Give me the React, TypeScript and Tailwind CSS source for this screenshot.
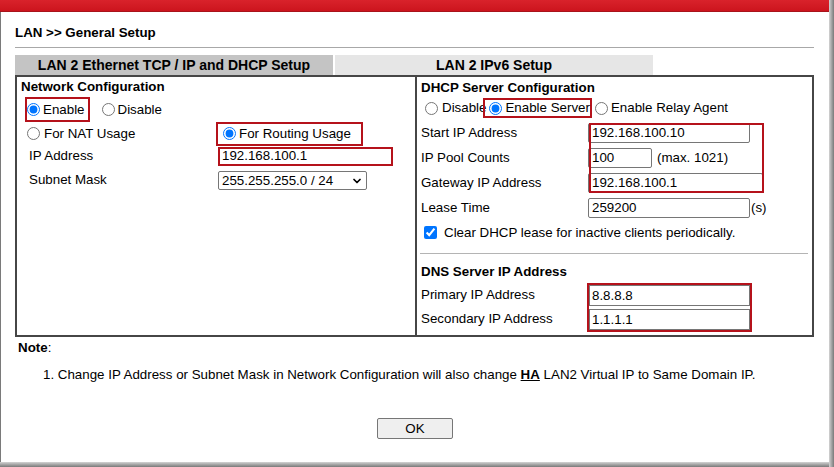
import { ChevronDown } from "lucide-react";

function Radio({ checked = false }: { checked?: boolean }) {
  return (
    <input
      type="radio"
      defaultChecked={checked}
      className="m-0 size-[13px] shrink-0"
    />
  );
}

function TextBox({ value, width }: { value: string; width: string }) {
  return (
    <input
      type="text"
      defaultValue={value}
      className={
        "h-[20px] rounded-[2px] border border-[#767676] bg-white px-[3px] text-[13.33px] text-black outline-none " +
        width
      }
    />
  );
}

function NetworkConfig() {
  return (
    <div className="border-r-2 border-[#464646]">
      <div className="h-[20px] pl-[4px] font-bold leading-[20px]">
        Network Configuration
      </div>
      <div className="flex h-[25px] items-stretch">
        <label className="ml-[8px] flex items-center gap-[3px] border-2 border-[#b5121b] pr-[3px]">
          <Radio checked />
          Enable
        </label>
        <label className="ml-[12px] flex items-center gap-[3px]">
          <Radio />
          Disable
        </label>
      </div>
      <div className="grid h-[22px] grid-cols-[201px_1fr]">
        <label className="ml-[10px] flex items-center gap-[4px]">
          <Radio />
          For NAT Usage
        </label>
        <label className="-ml-[2px] flex w-fit items-center gap-[3px] border-2 border-[#b5121b] pl-[5px] pr-[10px]">
          <Radio checked />
          For Routing Usage
        </label>
      </div>
      <div className="grid h-[24px] grid-cols-[201px_1fr] items-center">
        <span className="pl-[12px]">IP Address</span>
        <input
          type="text"
          defaultValue="192.168.100.1"
          className="h-[19px] w-[175px] border-2 border-[#b5121b] bg-white px-[2px] text-[13.33px] outline-none"
        />
      </div>
      <div className="grid h-[24px] grid-cols-[201px_1fr] items-center">
        <span className="pl-[12px]">Subnet Mask</span>
        <div className="relative h-[19px] w-[149px]">
          <select className="h-full w-full appearance-none rounded-[2px] border border-[#767676] bg-white px-[3px] text-[13.33px] leading-[17px] outline-none">
            <option>255.255.255.0 / 24</option>
          </select>
          <ChevronDown
            size={12}
            strokeWidth={3.5}
            className="pointer-events-none absolute right-[4px] top-[4px] text-black"
          />
        </div>
      </div>
    </div>
  );
}

function DhcpConfig() {
  return (
    <div className="pb-[3px]">
      <div className="h-[21px] pl-[4px] font-bold leading-[21px]">
        DHCP Server Configuration
      </div>
      <div className="flex h-[20px] items-stretch">
        <label className="ml-[8px] flex items-center gap-[4px]">
          <Radio />
          Disable
        </label>
        <label className="relative -ml-[3px] flex items-center gap-[3px] border-2 border-[#b5121b] pl-[4px]">
          <Radio checked />
          Enable Server
        </label>
        <label className="ml-[3px] flex items-center gap-[3px]">
          <Radio />
          Enable Relay Agent
        </label>
      </div>

      <div className="relative mt-[2px]">
        <div className="grid h-[25px] grid-cols-[171px_1fr] items-center">
          <span className="pl-[4px]">Start IP Address</span>
          <TextBox value="192.168.100.10" width="w-[162px]" />
        </div>
        <div className="grid h-[25px] grid-cols-[171px_1fr] items-center">
          <span className="pl-[4px]">IP Pool Counts</span>
          <div className="flex items-center">
            <TextBox value="100" width="w-[64px]" />
            <span className="ml-[5px]">(max. 1021)</span>
          </div>
        </div>
        <div className="grid h-[25px] grid-cols-[171px_1fr] items-center">
          <span className="pl-[4px]">Gateway IP Address</span>
          <TextBox value="192.168.100.1" width="w-[175px]" />
        </div>
        <div className="pointer-events-none absolute left-[172px] top-[3px] h-[70px] w-[175px] border-2 border-[#b5121b]" />
      </div>

      <div className="grid h-[25px] grid-cols-[171px_1fr] items-center">
        <span className="pl-[4px]">Lease Time</span>
        <div className="flex items-center">
          <TextBox value="259200" width="w-[162px]" />
          <span className="ml-[1px]">(s)</span>
        </div>
      </div>
      <label className="flex h-[25px] items-center gap-[7px] pl-[7px]">
        <input type="checkbox" defaultChecked className="m-0 size-[13px]" />
        Clear DHCP lease for inactive clients periodically.
      </label>

      <div className="flex h-[16px] items-center pl-[3px] pr-[4px]">
        <div className="h-px w-full bg-[#b4b4b4]" />
      </div>

      <div className="h-[22px] pl-[4px] font-bold leading-[22px]">
        DNS Server IP Address
      </div>
      <div className="flex">
        <div className="w-[170px] pl-[4px]">
          <div className="h-[24px] leading-[24px]">Primary IP Address</div>
          <div className="h-[24px] leading-[24px]">Secondary IP Address</div>
        </div>
        <div className="flex h-[49px] w-[165px] flex-col gap-[3px] border-2 border-[#b5121b]">
          <input
            type="text"
            defaultValue="8.8.8.8"
            className="h-[21px] w-full border border-[#767676] bg-white px-[2px] text-[13.33px] outline-none"
          />
          <input
            type="text"
            defaultValue="1.1.1.1"
            className="h-[21px] w-full border border-[#767676] bg-white px-[2px] text-[13.33px] outline-none"
          />
        </div>
      </div>
    </div>
  );
}

export default function App() {
  return (
    <div className="flex h-[467px] w-[834px] overflow-hidden bg-white font-['Liberation_Sans',Arial,sans-serif] text-[13.33px] text-black">
      <div className="flex w-[829px] flex-col">
        <div className="h-[12px] border-b border-[#a8141b] bg-gradient-to-b from-[#d9222b] to-[#cc141d]" />
        <div className="h-[450px] border-l border-[#7a7a7a] pl-[14px]">
          <div className="mt-[13px] font-bold leading-[16px]">
            LAN &gt;&gt; General Setup
          </div>
          <div className="mt-[6px] h-px w-[799px] bg-[#a8a8a8]" />

          <div className="mt-[7px] flex h-[20px] gap-[2px] text-[14px]">
            <div className="w-[318px] bg-[#c4c4c4] text-center font-bold leading-[20px]">
              LAN 2 Ethernet TCP / IP and DHCP Setup
            </div>
            <div className="w-[318px] bg-[#e6e6e6] text-center font-bold leading-[20px]">
              LAN 2 IPv6 Setup
            </div>
          </div>

          <div className="grid w-[799px] grid-cols-[400px_1fr] border-2 border-[#464646]">
            <NetworkConfig />
            <DhcpConfig />
          </div>

          <div className="ml-[3px] mt-[3px] leading-[16px]">
            <span className="font-bold">Note</span>:
          </div>
          <div className="mt-[11px] pl-[28px] leading-[16px]">
            1. Change IP Address or Subnet Mask in Network Configuration will
            also change <span className="font-bold underline">HA</span> LAN2
            Virtual IP to Same Domain IP.
          </div>

          <div className="mt-[35px] flex justify-center pr-[14px]">
            <button className="h-[21px] w-[76px] rounded-[2px] border border-[#767676] bg-[#efefef] text-[13.33px]">
              OK
            </button>
          </div>
        </div>
        <div className="h-[5px] bg-gradient-to-b from-[#d4d4d4] to-[#7a7a7a]" />
      </div>
      <div className="w-[5px] bg-gradient-to-r from-[#d4d4d4] to-[#7a7a7a]" />
    </div>
  );
}
